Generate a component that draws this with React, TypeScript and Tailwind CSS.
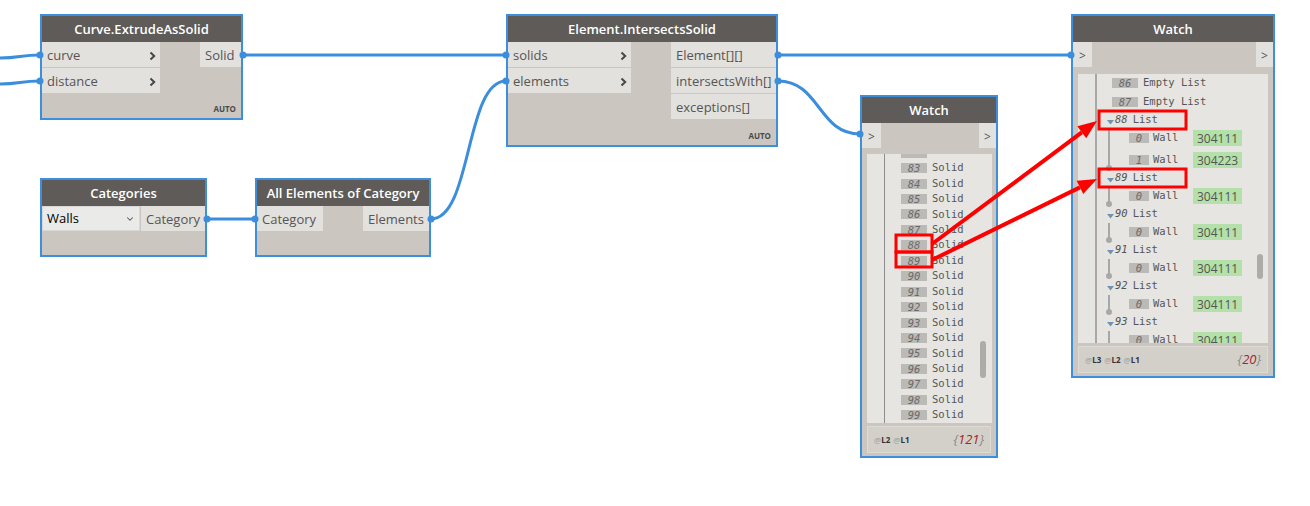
import React from "react";
import { ChevronDown } from "lucide-react";

// node chrome shared by every block on the canvas
function Header({ title }: { title: string }) {
  return (
    <div className="flex h-[26px] shrink-0 items-center justify-center bg-[#5e5b58] pt-[2px] text-[13px] font-semibold text-white">
      {title}
    </div>
  );
}

function Chevron() {
  return (
    <svg width="7" height="10" viewBox="0 0 7 10" className="shrink-0">
      <path d="M1.5 1.5 L5.2 5 L1.5 8.5" fill="none" stroke="#474747" strokeWidth="2" />
    </svg>
  );
}

function InPort({ label, arrow }: { label: string; arrow?: boolean }) {
  return (
    <div className="flex h-[25px] items-center justify-between bg-[#e3e1dd] pl-[5px] pr-[4px] pt-[2px] text-[13px] text-[#555]">
      <span>{label}</span>
      {arrow && <Chevron />}
    </div>
  );
}

function OutPort({ label, className = "" }: { label: string; className?: string }) {
  return (
    <div className={`flex h-[25px] items-center bg-[#e3e1dd] pl-[5px] pt-[2px] text-[13px] text-[#555] ${className}`}>
      {label}
    </div>
  );
}

function Auto() {
  return <div className="mt-auto pb-[5px] pr-[5px] text-right text-[8px] font-bold leading-[8px] text-[#4a4a4a]">AUTO</div>;
}

function Badge({ n, w = "w-[26px]" }: { n?: number; w?: string }) {
  return (
    <span className={`flex h-[10px] shrink-0 items-center justify-center bg-[#bcbab6] text-[10.5px] italic leading-[10px] text-[#6b6b6b] ${w}`}>
      {n}
    </span>
  );
}

function WatchTop() {
  return (
    <div className="flex h-[25px] shrink-0 justify-between">
      <div className="flex w-[19px] items-center justify-center bg-[#e3e1dd] pt-[2px] text-[12px] text-[#555]">&gt;</div>
      <div className="flex w-[17px] items-center justify-center bg-[#e3e1dd] pt-[2px] text-[12px] text-[#555]">&gt;</div>
    </div>
  );
}

function Footer({ levels, count }: { levels: string[]; count: number }) {
  return (
    <div className="mx-[5px] mt-[3px] flex h-[27px] shrink-0 items-center justify-between border border-[#dedbd6] bg-[#d3d0ca] pl-[6px] pr-[6px]">
      <div className="flex gap-[3px] text-[8px]">
        {levels.map((l) => (
          <span key={l}>
            <span className="text-[#9a9a9a]">@</span>
            <span className="font-bold text-[#333]">{l}</span>
          </span>
        ))}
      </div>
      <div className="text-[13px] italic">
        <span className="text-[#8a8a8a]">{"{"}</span>
        <span className="text-[#a3262c]">{count}</span>
        <span className="text-[#8a8a8a]">{"}"}</span>
      </div>
    </div>
  );
}

function Tri() {
  return (
    <svg width="7" height="5" viewBox="0 0 7 5" className="mt-[5px] shrink-0">
      <path d="M0 0 L7 0 L3.5 4.5 Z" fill="#6d92b8" />
    </svg>
  );
}

function WallItem({ i, id }: { i: number; id: string }) {
  return (
    <div className="flex h-[18px] items-center">
      <Badge n={i} w="w-[20px]" />
      <span className="ml-[4px] w-[40px]">Wall</span>
      <span className="flex h-[16px] items-center bg-[#b4e0a9] px-[4px] pt-[1px] font-['Open_Sans',sans-serif] text-[12px] text-[#555]">{id}</span>
    </div>
  );
}

function ListGroup({ n, items }: { n: number; items: string[] }) {
  return (
    <div>
      <div className="flex h-[18px] items-center pl-[10px]">
        <Tri />
        <span className="ml-[1px] italic text-[#555]">{n}</span>
        <span className="ml-[5px]">List</span>
      </div>
      <div className="relative ml-[11px] flex flex-col gap-[4px] border-l-2 border-[#a8a8a8] pl-[19px]">
        {items.map((id, i) => (
          <WallItem key={i} i={i} id={id} />
        ))}
        <span className="absolute -bottom-[2px] -left-[4px] h-[6px] w-[6px] rounded-full bg-[#a8a8a8]" />
      </div>
    </div>
  );
}

const solids = [83, 84, 85, 86, 87, 88, 89, 90, 91, 92, 93, 94, 95, 96, 97, 98, 99];

// arrowhead polygon pointing from (x1,y1) to (x2,y2)
function arrow(x1: number, y1: number, x2: number, y2: number) {
  const dx = x2 - x1;
  const dy = y2 - y1;
  const len = Math.hypot(dx, dy);
  const ux = dx / len;
  const uy = dy / len;
  const bx = x2 - ux * 19;
  const by = y2 - uy * 19;
  const px = -uy * 7.5;
  const py = ux * 7.5;
  return {
    line: `M${x1} ${y1} L${bx} ${by}`,
    head: `${x2},${y2} ${bx + px},${by + py} ${bx - px},${by - py}`,
  };
}

export default function App() {
  const a1 = arrow(932, 244, 1097, 121);
  const a2 = arrow(932, 260, 1097, 179);

  return (
    <div className="relative h-[506px] w-[1310px] overflow-hidden bg-white font-['Open_Sans',sans-serif]">
      {/* Curve.ExtrudeAsSolid */}
      <div className="absolute left-[40px] top-[14px] flex h-[106px] w-[203px] flex-col border-2 border-[#3d8fdb] bg-[#cbc7c0]">
        <Header title="Curve.ExtrudeAsSolid" />
        <div className="flex justify-between">
          <div className="flex w-[118px] flex-col gap-px">
            <InPort label="curve" arrow />
            <InPort label="distance" arrow />
          </div>
          <div className="flex flex-col">
            <OutPort label="Solid" className="w-[41px]" />
          </div>
        </div>
        <Auto />
      </div>

      {/* Element.IntersectsSolid */}
      <div className="absolute left-[506px] top-[14px] flex h-[133px] w-[272px] flex-col border-2 border-[#3d8fdb] bg-[#cbc7c0]">
        <Header title="Element.IntersectsSolid" />
        <div className="flex justify-between">
          <div className="flex w-[123px] flex-col gap-px">
            <InPort label="solids" arrow />
            <InPort label="elements" arrow />
          </div>
          <div className="flex w-[105px] flex-col gap-px">
            <OutPort label="Element[][]" />
            <OutPort label="intersectsWith[]" />
            <OutPort label="exceptions[]" />
          </div>
        </div>
        <Auto />
      </div>

      {/* Categories */}
      <div className="absolute left-[40px] top-[178px] flex h-[79px] w-[167px] flex-col border-2 border-[#3d8fdb] bg-[#cbc7c0]">
        <Header title="Categories" />
        <div className="flex justify-between">
          <div className="flex h-[25px] w-[98px] items-center justify-between border border-[#d8d8d8] bg-[#eaeae8] pl-[4px] pr-[4px] pt-[1px] text-[13px] text-black">
            <span>Walls</span>
            <ChevronDown size={10} strokeWidth={2.5} color="#555" />
          </div>
          <OutPort label="Category" className="w-[64px]" />
        </div>
      </div>

      {/* All Elements of Category */}
      <div className="absolute left-[255px] top-[178px] flex h-[79px] w-[176px] flex-col border-2 border-[#3d8fdb] bg-[#cbc7c0]">
        <Header title="All Elements of Category" />
        <div className="flex justify-between">
          <div className="w-[66px]">
            <InPort label="Category" />
          </div>
          <OutPort label="Elements" className="w-[66px]" />
        </div>
      </div>

      {/* Watch: flat list of solids */}
      <div className="absolute left-[860px] top-[95px] flex h-[363px] w-[138px] flex-col border-2 border-[#3d8fdb] bg-[#cbc7c0]">
        <Header title="Watch" />
        <WatchTop />
        <div className="relative ml-[5px] mr-[4px] mt-[6px] h-[269px] shrink-0 overflow-hidden bg-[#e6e5e1] font-['DejaVu_Sans_Mono',monospace] text-[10.5px] text-[#555]">
          <div className="-mt-[9px] ml-[17px] min-h-[290px] border-l border-[#8e8e8e] pl-[16px]">
            {/* row 82 sits above the scroll edge, only its badge peeks in */}
            <div className="flex h-[15.44px] items-center">
              <Badge />
            </div>
            {solids.map((n) => (
              <div key={n} className="flex h-[15.44px] items-center">
                <Badge n={n} />
                <span className="ml-[5px]">Solid</span>
              </div>
            ))}
          </div>
          <span className="absolute left-[113px] top-[187px] h-[37px] w-[6px] rounded-full bg-[#aeaca8]" />
        </div>
        <Footer levels={["L2", "L1"]} count={121} />
      </div>

      {/* Watch: nested lists of walls */}
      <div className="absolute left-[1071px] top-[14px] flex h-[364px] w-[204px] flex-col border-2 border-[#3d8fdb] bg-[#cbc7c0]">
        <Header title="Watch" />
        <WatchTop />
        <div className="relative mx-[5px] mt-[7px] h-[269px] shrink-0 overflow-hidden bg-[#e6e5e1] font-['DejaVu_Sans_Mono',monospace] text-[10.5px] text-[#555]">
          <div className="-mt-[1px] ml-[17px] min-h-[290px] border-l-2 border-[#a8a8a8]">
            {[86, 87].map((n) => (
              <div key={n} className="flex h-[19px] items-center pl-[15px]">
                <Badge n={n} />
                <span className="ml-[5px]">Empty List</span>
              </div>
            ))}
            <ListGroup n={88} items={["304111", "304223"]} />
            <ListGroup n={89} items={["304111"]} />
            <ListGroup n={90} items={["304111"]} />
            <ListGroup n={91} items={["304111"]} />
            <ListGroup n={92} items={["304111"]} />
            <ListGroup n={93} items={["304111"]} />
          </div>
          <span className="absolute left-[179px] top-[180px] h-[25px] w-[6px] rounded-full bg-[#aeaca8]" />
        </div>
        <Footer levels={["L3", "L2", "L1"]} count={20} />
      </div>

      {/* wires and port nubs */}
      <svg className="pointer-events-none absolute left-0 top-0" width="1310" height="506">
        <g fill="none" stroke="#3b8edb" strokeWidth="3">
          <path d="M0 58 C 20 58, 20 55, 40 55" />
          <path d="M0 84 C 20 84, 20 81, 40 81" />
          <path d="M243 55 L506 55" />
          <path d="M778 55 L1071 55" />
          <path d="M778 81 C 820 81, 818 134, 860 134" />
          <path d="M207 219 L255 219" />
          <path d="M431 219 C 472 219, 465 81, 506 81" />
        </g>
        <g fill="#3b8edb">
          {[
            [40, 55], [40, 81], [243, 55], [506, 55], [506, 81], [778, 55], [778, 81],
            [1071, 55], [860, 134], [207, 219], [255, 219], [431, 219],
          ].map(([x, y]) => (
            <circle key={`${x}-${y}`} cx={x} cy={y} r="3.5" />
          ))}
        </g>
      </svg>

      {/* red call-outs */}
      <svg className="pointer-events-none absolute left-0 top-0" width="1310" height="506">
        <g fill="none" stroke="#ff0000" strokeWidth="3">
          <rect x="896" y="235" width="36" height="17" />
          <rect x="896" y="252" width="36" height="15" />
          <rect x="1099" y="111" width="87" height="18" />
          <rect x="1099" y="169" width="87" height="18" />
        </g>
        <g stroke="#ff0000" strokeWidth="4" fill="none">
          <path d={a1.line} />
          <path d={a2.line} />
        </g>
        <g fill="#ff0000">
          <polygon points={a1.head} />
          <polygon points={a2.head} />
        </g>
      </svg>
    </div>
  );
}
